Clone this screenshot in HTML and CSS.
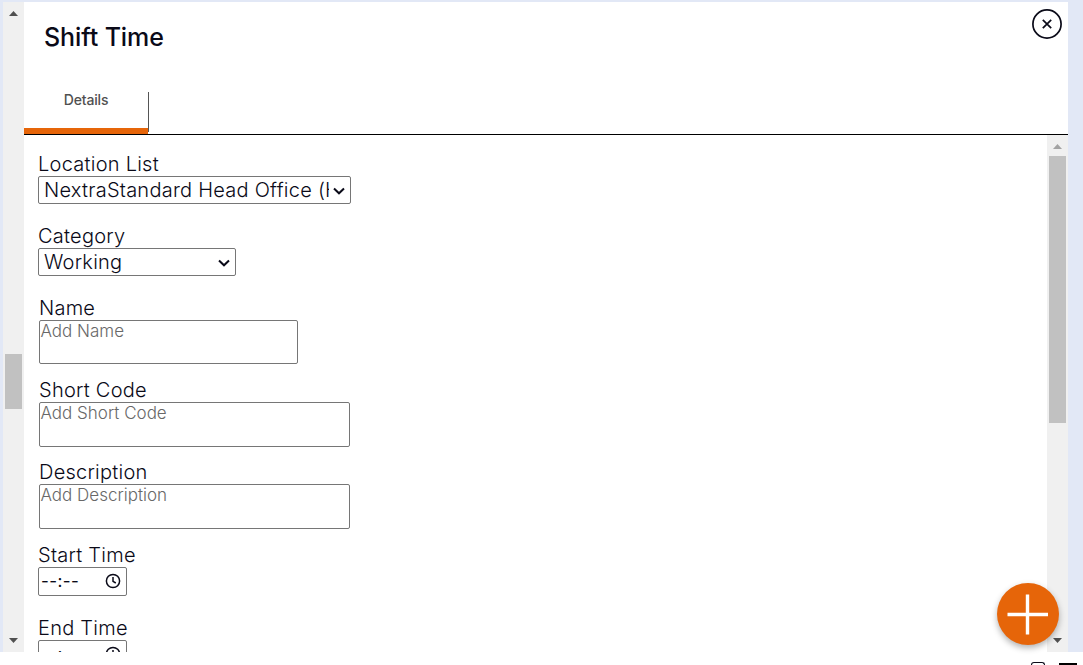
FILE: index.html
```html
<!DOCTYPE html>
<html lang="en">
<head>
  <meta charset="UTF-8" />
  <meta name="viewport" content="width=device-width, initial-scale=1.0"/>
  <title>Shift Time</title>
  <link rel="stylesheet" href="styles.css">
</head>
<body>
  <div class="page">
    <!-- Outer scrollbar -->
    <div class="scrollbar outer-scroll">
      <svg class="arrow" viewBox="0 0 9 5"><path d="M0 5L4.5 0L9 5Z"/></svg>
      <div class="thumb"></div>
      <svg class="arrow" viewBox="0 0 9 5"><path d="M0 0H9L4.5 5Z"/></svg>
    </div>

    <div class="panel">
      <div class="panel-header">
        <h1>Shift Time</h1>
        <button class="close-btn" aria-label="Close">
          <svg viewBox="0 0 30 30"><circle cx="15" cy="15" r="14.1"/><path d="M10.8 10.8L19.2 19.2M19.2 10.8L10.8 19.2"/></svg>
        </button>
      </div>

      <div class="tabs">
        <div class="tab">Details</div>
      </div>

      <div class="panel-body">
        <form class="form">
          <div class="field">
            <label for="location">Location List</label>
            <div class="select-box select-location">
              <select id="location">
                <option>NextraStandard Head Office (Head Office)</option>
              </select>
              <svg class="chevron" viewBox="0 0 12 8"><path d="M1 1.5L6 6.3L11 1.5"/></svg>
            </div>
          </div>

          <div class="field">
            <label for="category">Category</label>
            <div class="select-box select-category">
              <select id="category">
                <option>Working</option>
              </select>
              <svg class="chevron" viewBox="0 0 12 8"><path d="M1 1.5L6 6.3L11 1.5"/></svg>
            </div>
          </div>

          <div class="field field-text">
            <label for="name">Name</label>
            <textarea id="name" class="name-input" placeholder="Add Name"></textarea>
          </div>

          <div class="field field-text">
            <label for="code">Short Code</label>
            <textarea id="code" placeholder="Add Short Code"></textarea>
          </div>

          <div class="field field-text field-last-text">
            <label for="description">Description</label>
            <textarea id="description" placeholder="Add Description"></textarea>
          </div>

          <div class="field">
            <label>Start Time</label>
            <div class="time-box">
              <span>--:--</span>
              <svg viewBox="0 0 16 16"><circle cx="8" cy="8" r="6.6"/><path d="M8 4V8.3L10.8 10"/></svg>
            </div>
          </div>

          <div class="field">
            <label>End Time</label>
            <div class="time-box">
              <span>--:--</span>
              <svg viewBox="0 0 16 16"><circle cx="8" cy="8" r="6.6"/><path d="M8 4V8.3L10.8 10"/></svg>
            </div>
          </div>
        </form>

        <!-- Inner scrollbar -->
        <div class="scrollbar inner-scroll">
          <svg class="arrow arrow-off" viewBox="0 0 9 5"><path d="M0 5L4.5 0L9 5Z"/></svg>
          <div class="thumb"></div>
          <svg class="arrow" viewBox="0 0 9 5"><path d="M0 0H9L4.5 5Z"/></svg>
        </div>
      </div>
    </div>
  </div>

  <!-- Bottom strip, icons are cut off by the window -->
  <div class="footer">
    <span class="foot-box"></span>
    <span class="foot-bar"></span>
  </div>

  <button class="add-btn" aria-label="Add">
    <svg viewBox="0 0 62 62"><path d="M10.5 31.5H51M30.5 11.5V51.5"/></svg>
  </button>
</body>
</html>
```

FILE: styles.css
```css
* {
  box-sizing: border-box;
}

body {
  font-family: Inter, "Liberation Sans", sans-serif;
  background-color: #fff;
  color: #0a0a18;
  margin: 0;
  height: 665px;
  overflow: hidden;
}

.page {
  display: flex;
  height: 652px;
  padding: 2px 15px 0 3px;
  background-color: #e2e8f6;
}

.panel {
  flex: 1;
  display: flex;
  flex-direction: column;
  background-color: #fff;
}

.panel-header {
  display: flex;
  justify-content: space-between;
  height: 90px;
  padding: 7px 6px 0 20px;
}

h1 {
  margin: 12px 0 0;
  font-size: 25px;
  font-weight: 500;
  line-height: 32px;
  letter-spacing: -0.1px;
}

.close-btn {
  width: 30px;
  height: 30px;
  padding: 0;
  border: none;
  background: none;
  cursor: pointer;
}

.close-btn svg {
  display: block;
  fill: none;
  stroke: #0a0a18;
  stroke-width: 1.7;
}

.tabs {
  height: 43px;
  border-bottom: 1px solid #000;
}

.tab {
  position: relative;
  width: 125px;
  height: 40px;
  border-right: 1px solid #555;
  font-size: 14px;
  font-weight: 500;
  line-height: 16px;
  letter-spacing: -0.15px;
  text-align: center;
  color: #505050;
}

/* orange line under the active tab */
.tab::after {
  content: "";
  position: absolute;
  left: 0;
  bottom: -2px;
  width: 124px;
  height: 6px;
  background-color: #e66509;
}

.panel-body {
  flex: 1;
  display: flex;
  min-height: 0;
}

.form {
  flex: 1;
  padding: 17px 0 0 14px;
  overflow: hidden;
}

.field {
  margin-bottom: 20px;
}

.field-text {
  margin-bottom: 13px;
  padding-left: 1px;
}

.field-last-text {
  margin-bottom: 14px;
}

label {
  display: block;
  font-size: 20px;
  font-weight: 300;
  line-height: 24px;
  letter-spacing: 0.25px;
}

.select-box {
  position: relative;
  height: 28px;
  border: 1px solid #767676;
  border-radius: 2px;
}

.select-location {
  width: 313px;
}

.select-category {
  width: 198px;
}

select {
  appearance: none;
  display: block;
  width: calc(100% - 21px);
  height: 26px;
  padding: 0 0 0 5px;
  border: none;
  background: none;
  font: 300 20px Inter, sans-serif;
  letter-spacing: 0.25px;
  color: #0a0a18;
}

.chevron {
  position: absolute;
  right: 5px;
  top: 10px;
  width: 12px;
  height: 8px;
  fill: none;
  stroke: #0a0a18;
  stroke-width: 2;
}

textarea {
  display: block;
  width: 311px;
  height: 45px;
  padding: 0 0.5px;
  border: 1px solid #767676;
  border-radius: 2px;
  resize: none;
  font: 300 17px/20px Inter, sans-serif;
}

textarea::placeholder {
  color: #686868;
}

.name-input {
  width: 259px;
  height: 44px;
  margin-bottom: 14px;
}

.time-box {
  display: flex;
  justify-content: space-between;
  width: 89px;
  height: 29px;
  padding: 0 5px 0 2px;
  border: 1px solid #767676;
  border-radius: 2px;
  font-size: 17px;
  font-weight: 400;
  line-height: 27px;
  letter-spacing: 0.4px;
}

.time-box svg {
  width: 16px;
  height: 16px;
  margin-top: 5px;
  fill: none;
  stroke: #0a0a18;
  stroke-width: 1.5;
}

/* Scrollbars */
.scrollbar {
  display: flex;
  flex-direction: column;
  align-items: center;
  width: 21px;
  background-color: #f0f0f0;
}

.thumb {
  width: 17px;
  background-color: #c1c1c1;
}

.arrow {
  width: 9px;
  height: 5px;
  fill: #505050;
}

.arrow-off {
  fill: #a3a3a3;
}

.outer-scroll {
  padding: 9px 0;
  justify-content: space-between;
}

.outer-scroll .thumb {
  height: 55px;
  margin-top: 108px;
}

.inner-scroll {
  padding: 9px 0;
}

.inner-scroll .thumb {
  height: 267px;
  margin: 7px 0 auto;
}

.footer {
  display: flex;
  align-items: flex-end;
  justify-content: flex-end;
  gap: 14px;
  height: 13px;
  padding-right: 6px;
}

.foot-box {
  width: 14px;
  height: 3px;
  border: 1px solid #0a0a18;
  border-bottom: none;
  border-radius: 3px 3px 0 0;
}

.foot-bar {
  width: 18px;
  height: 2px;
  background-color: #000;
}

/* Floating add button */
.add-btn {
  position: fixed;
  left: 997px;
  top: 583px;
  width: 62px;
  height: 62px;
  padding: 0;
  border: none;
  border-radius: 50%;
  background-color: #e66509;
  box-shadow: 0 3px 6px rgba(0,0,0,0.3);
  cursor: pointer;
}

.add-btn svg {
  display: block;
  stroke: #fff;
  stroke-width: 3.4;
}
```
